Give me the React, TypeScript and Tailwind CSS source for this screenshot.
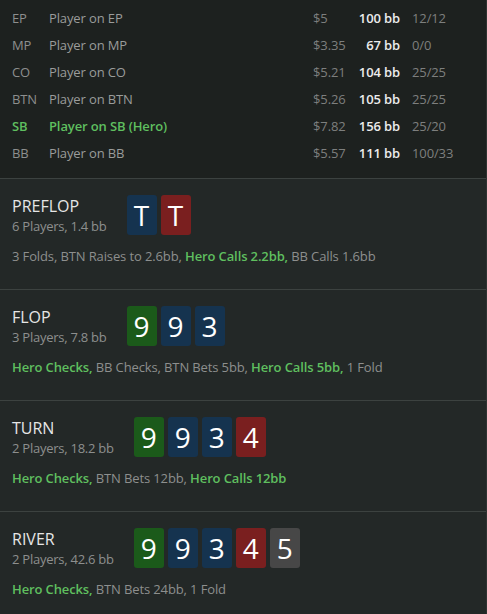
const font = { fontFamily: '"Open Sans", "Noto Sans", sans-serif' };

type Player = { pos: string; name: string; money: string; bb: string; count: string; hero?: boolean };

const players: Player[] = [
  { pos: "EP", name: "Player on EP", money: "$5", bb: "100 bb", count: "12/12" },
  { pos: "MP", name: "Player on MP", money: "$3.35", bb: "67 bb", count: "0/0" },
  { pos: "CO", name: "Player on CO", money: "$5.21", bb: "104 bb", count: "25/25" },
  { pos: "BTN", name: "Player on BTN", money: "$5.26", bb: "105 bb", count: "25/25" },
  { pos: "SB", name: "Player on SB (Hero)", money: "$7.82", bb: "156 bb", count: "25/20", hero: true },
  { pos: "BB", name: "Player on BB", money: "$5.57", bb: "111 bb", count: "100/33" },
];

type Suit = "g" | "b" | "r" | "k";

const suitBg: Record<Suit, string> = {
  g: "bg-[#1b5a1a]",
  b: "bg-[#15334f]",
  r: "bg-[#7a1f1f]",
  k: "bg-[#474747]",
};

type Action = { text: string; hero?: boolean };

type Street = {
  name: string;
  info: string;
  cards: [string, Suit][];
  actions: Action[];
};

const streets: Street[] = [
  {
    name: "PREFLOP",
    info: "6 Players, 1.4 bb",
    cards: [["T", "b"], ["T", "r"]],
    actions: [
      { text: "3 Folds, BTN Raises to 2.6bb, " },
      { text: "Hero Calls 2.2bb,", hero: true },
      { text: " BB Calls 1.6bb" },
    ],
  },
  {
    name: "FLOP",
    info: "3 Players, 7.8 bb",
    cards: [["9", "g"], ["9", "b"], ["3", "b"]],
    actions: [
      { text: "Hero Checks,", hero: true },
      { text: " BB Checks, BTN Bets 5bb, " },
      { text: "Hero Calls 5bb,", hero: true },
      { text: " 1 Fold" },
    ],
  },
  {
    name: "TURN",
    info: "2 Players, 18.2 bb",
    cards: [["9", "g"], ["9", "b"], ["3", "b"], ["4", "r"]],
    actions: [
      { text: "Hero Checks,", hero: true },
      { text: " BTN Bets 12bb, " },
      { text: "Hero Calls 12bb", hero: true },
    ],
  },
  {
    name: "RIVER",
    info: "2 Players, 42.6 bb",
    cards: [["9", "g"], ["9", "b"], ["3", "b"], ["4", "r"], ["5", "k"]],
    actions: [
      { text: "Hero Checks,", hero: true },
      { text: " BTN Bets 24bb, 1 Fold" },
    ],
  },
];

function Card({ rank, suit }: { rank: string; suit: Suit }) {
  return (
    <div
      className={`w-[30px] h-[40px] rounded-[3px] flex items-center justify-center text-white text-[28px] leading-none ${suitBg[suit]}`}
    >
      {rank}
    </div>
  );
}

function StreetBlock({ street }: { street: Street }) {
  return (
    <div className="border-t border-[#3c4240] bg-[#232827] pl-3 pt-4 pb-6">
      <div className="flex items-center">
        <div className="flex flex-col">
          <div className="text-[16px] leading-[22px] text-[#e6e6e6]">{street.name}</div>
          <div className="text-[13px] leading-[18px] tracking-[-0.25px] text-[#8d8f8e]">{street.info}</div>
        </div>
        <div className="ml-5 flex gap-1">
          {street.cards.map(([rank, suit], i) => (
            <Card key={i} rank={rank} suit={suit} />
          ))}
        </div>
      </div>
      <div className="mt-3 text-[13px] leading-[18px] tracking-[-0.12px] text-[#8d8f8e]">
        {street.actions.map((a, i) => (
          <span key={i} className={a.hero ? "font-semibold text-[#5fbf5f]" : ""}>
            {a.text}
          </span>
        ))}
      </div>
    </div>
  );
}

export default function App() {
  return (
    <div className="w-[487px] h-[614px] overflow-hidden bg-[#232827] border-r border-[#2e3331]" style={font}>
      <div className="bg-[#1d211f] pl-3 pt-[5px] pb-[11px] text-[13px] tracking-[-0.12px]">
        {players.map((p) => (
          <div key={p.pos} className="flex items-center h-[27px]">
            <div className={`w-[37px] ${p.hero ? "font-semibold text-[#5fbf5f]" : "text-[#8d8f8e]"}`}>{p.pos}</div>
            <div className={`flex-1 ${p.hero ? "font-semibold text-[#5fbf5f]" : "text-[#9a9c9b]"}`}>{p.name}</div>
            <div className="w-[45px] text-[#7d7f7e]">{p.money}</div>
            <div className="w-[42px] text-right font-semibold text-[#ececec] whitespace-nowrap">{p.bb}</div>
            <div className="w-[86px] pl-3 text-[#7d7f7e]">{p.count}</div>
          </div>
        ))}
      </div>
      {streets.map((s) => (
        <StreetBlock key={s.name} street={s} />
      ))}
    </div>
  );
}
